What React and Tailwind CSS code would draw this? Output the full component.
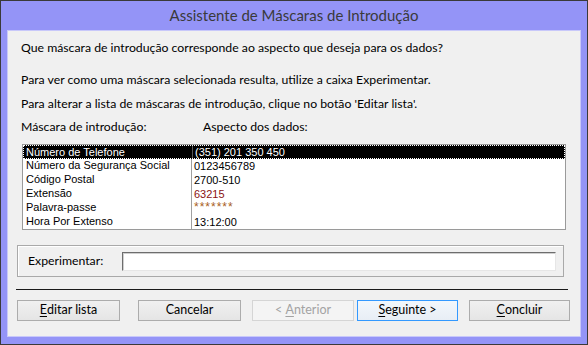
import React from 'react';

const UI = { fontFamily: 'Lato, "Noto Sans", sans-serif' };
const LIST = { fontFamily: '"Liberation Sans", Arial, sans-serif' };

const rows = [
  { name: 'Número de Telefone', value: '(351) 201 350 450', selected: true },
  { name: 'Número da Segurança Social', value: '0123456789' },
  { name: 'Código Postal', value: '2700-510' },
  { name: 'Extensão', value: '63215', valueClass: 'text-[#8a1212]' },
  { name: 'Palavra-passe', value: '*******', valueClass: 'text-[#a8601c] text-[12px] tracking-[1px] -mt-[2px]' },
  { name: 'Hora Por Extenso', value: '13:12:00' },
];

// Mnemonic letter is underlined like a Windows access key
const Mn = ({ children }) => <span className="underline underline-offset-2">{children}</span>;

const Button = ({ children, className = '', variant = 'normal' }) => {
  const styles = {
    normal: 'border-[#acacac] bg-gradient-to-b from-[#f0f0f0] to-[#e5e5e5] text-black',
    disabled: 'border-[#d5d5d5] bg-[#f4f4f4] text-[#a3a3a3]',
    default: 'border-[#3399ff] bg-gradient-to-b from-[#f2f7fc] to-[#e8eef5] text-black',
  };
  return (
    <div
      className={`h-[21px] border flex items-center justify-center whitespace-pre text-[12.5px] leading-none ${styles[variant]} ${className}`}
      style={UI}
    >
      {children}
    </div>
  );
};

const ListBox = () => (
  <div className="ml-[14px] mt-[9px] w-[544px] h-[86px] border border-[#9a9a9a] bg-white" style={LIST}>
    {rows.map((r, i) => (
      <div
        key={i}
        className={`flex h-[14px] text-[11px] leading-[13px] ${
          r.selected ? 'bg-black text-white border border-dotted border-white' : 'text-black'
        }`}
      >
        <div className={`w-[168px] ${r.selected ? 'pl-[2px]' : 'pl-[3px]'} whitespace-nowrap`}>{r.name}</div>
        <div className={`flex-1 pl-[2px] border-l ${r.selected ? 'border-[#555]' : 'border-[#a0a0a0]'} flex items-center`}>
          <span className={r.valueClass || ''}>{r.value}</span>
        </div>
      </div>
    ))}
  </div>
);

export default function App() {
  return (
    <div className="w-[588px] h-[345px] bg-[#9494f7] border border-[#3a3a3a] flex flex-col" style={UI}>
      {/* Title bar */}
      <div className="h-[29px] flex items-center justify-center text-[15px] text-[#3a3a3a]">
        Assistente de Máscaras de Introdução
      </div>

      {/* Dialog body */}
      <div className="mx-[6px] mb-[7px] flex-1 border border-[#c8c8fa] bg-[#f0f0f0] text-[12.25px] leading-[16px] text-black">
        <div className="pl-[13px] pt-[9px]">
          <p>Que máscara de introdução corresponde ao aspecto que deseja para os dados?</p>
          <p className="mt-[16px]">Para ver como uma máscara selecionada resulta, utilize a caixa Experimentar.</p>
          <p className="mt-[8px]">Para alterar a lista de máscaras de introdução, clique no botão 'Editar lista'.</p>
          <div className="mt-[7px] flex">
            <span className="w-[182px]">Máscara de introdução:</span>
            <span>Aspecto dos dados:</span>
          </div>
        </div>

        <ListBox />

        {/* Experimentar group */}
        <div className="ml-[9px] mt-[15px] w-[547px] h-[32px] border border-[#a9a9a9] shadow-[inset_1px_1px_0_#fff] flex items-center">
          <span className="ml-[10px] w-[94px]">Experimentar:</span>
          <div className="w-[434px] h-[19px] bg-white border border-t-[#6d6d6d] border-l-[#6d6d6d] border-r-[#e6e6e6] border-b-[#e6e6e6] shadow-[inset_1px_1px_0_#cfcfcf]" />
        </div>

        <div className="ml-[8px] mt-[12px] w-[552px] h-px bg-[#1a1a1a]" />

        {/* Buttons */}
        <div className="mt-[10px] flex">
          <Button className="ml-[9px] w-[103px]"><Mn>E</Mn>ditar lista</Button>
          <Button className="ml-[18px] w-[103px]">Cancelar</Button>
          <Button className="ml-[11px] w-[102px]" variant="disabled">{'< '}<Mn>A</Mn>nterior</Button>
          <Button className="ml-[3px] w-[101px]" variant="default"><Mn>S</Mn>eguinte{' >'}</Button>
          <Button className="ml-[11px] w-[101px]"><Mn>C</Mn>oncluir</Button>
        </div>
      </div>
    </div>
  );
}
